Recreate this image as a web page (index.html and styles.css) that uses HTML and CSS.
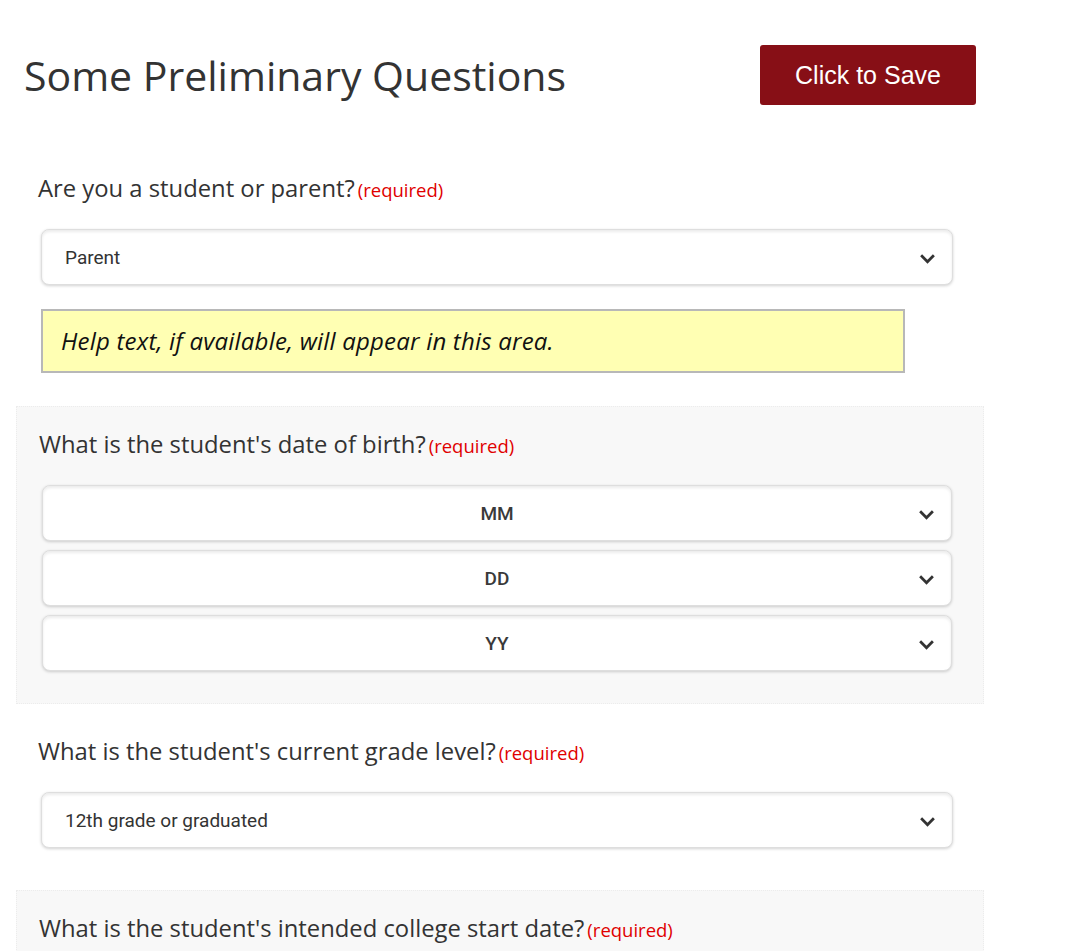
FILE: index.html
```html
<!DOCTYPE html>
<html lang="en">
<head>
    <meta charset="UTF-8">
    <meta name="viewport" content="width=device-width, initial-scale=1.0">
    <title>Some Preliminary Questions</title>
    <link rel="stylesheet" href="styles.css">
</head>
<body>
    <div class="page">
        <div class="header">
            <h1>Some Preliminary Questions</h1>
            <button type="button" class="save-btn">Click to Save</button>
        </div>

        <!-- Student or parent -->
        <div class="question has-help">
            <label class="q-label" for="role">Are you a student or parent?<span class="required">(required)</span></label>
            <div class="select-wrap">
                <select id="role">
                    <option>Parent</option>
                    <option>Student</option>
                </select>
                <svg class="chevron" viewBox="0 0 16 10"><path d="M2 2l6 6 6-6"/></svg>
            </div>
            <div class="help">Help text, if available, will appear in this area.</div>
        </div>

        <!-- Date of birth -->
        <div class="question alt">
            <label class="q-label" for="dob-mm">What is the student's date of birth?<span class="required">(required)</span></label>
            <div class="select-stack">
                <div class="select-wrap centered">
                    <select id="dob-mm"><option>MM</option></select>
                    <svg class="chevron" viewBox="0 0 16 10"><path d="M2 2l6 6 6-6"/></svg>
                </div>
                <div class="select-wrap centered">
                    <select id="dob-dd"><option>DD</option></select>
                    <svg class="chevron" viewBox="0 0 16 10"><path d="M2 2l6 6 6-6"/></svg>
                </div>
                <div class="select-wrap centered">
                    <select id="dob-yy"><option>YY</option></select>
                    <svg class="chevron" viewBox="0 0 16 10"><path d="M2 2l6 6 6-6"/></svg>
                </div>
            </div>
        </div>

        <!-- Grade level -->
        <div class="question">
            <label class="q-label" for="grade">What is the student's current grade level?<span class="required">(required)</span></label>
            <div class="select-wrap">
                <select id="grade">
                    <option>12th grade or graduated</option>
                </select>
                <svg class="chevron" viewBox="0 0 16 10"><path d="M2 2l6 6 6-6"/></svg>
            </div>
        </div>

        <!-- College start -->
        <div class="question alt">
            <label class="q-label" for="start">What is the student's intended college start date?<span class="required">(required)</span></label>
            <div class="select-wrap">
                <select id="start"><option>Select</option></select>
                <svg class="chevron" viewBox="0 0 16 10"><path d="M2 2l6 6 6-6"/></svg>
            </div>
        </div>
    </div>
</body>
</html>
```

FILE: styles.css
```css
body {
    margin: 0;
    padding: 0;
    background: #fff;
    color: #333;
    font-family: "Open Sans", Lato, sans-serif;
}

.page {
    width: 968px;
    margin-left: 16px;
}

/* Header */
.header {
    display: flex;
    align-items: center;
    justify-content: space-between;
    padding-top: 45px;
    margin-bottom: 45px;
    padding-right: 8px;
}

h1 {
    margin: 0 0 0 8px;
    font-size: 41px;
    font-weight: 400;
    color: #333;
}

.save-btn {
    width: 216px;
    height: 60px;
    border: none;
    border-radius: 3px;
    background-color: #870f16;
    color: #fff;
    font-family: "Liberation Sans", Arial, sans-serif;
    font-size: 25px;
    cursor: pointer;
}

/* Questions */
.question {
    padding: 22px 31px 33px 22px;
    margin-bottom: 9px;
}

.question.has-help {
    padding-bottom: 33px;
    margin-bottom: 0;
}

.question.alt {
    background: #f8f8f8;
    border: 1px dotted #ececec;
    padding-top: 21px;
    padding-bottom: 32px;
}

.q-label {
    display: block;
    height: 28px;
    padding-top: 2px;
    line-height: 28px;
    margin-bottom: 27px;
    font-size: 23.8px;
    color: #333;
}

.required {
    margin-left: 3px;
    font-size: 18.5px;
    color: #e00000;
}

.select-stack {
    display: flex;
    flex-direction: column;
    gap: 9px;
}

.select-wrap {
    position: relative;
    margin-left: 3px;
}

.select-wrap select {
    display: block;
    width: 100%;
    height: 56px;
    padding: 0 50px 0 23px;
    border: 1px solid #dedede;
    border-radius: 8px;
    background: #fff;
    box-shadow: inset 0 2px 3px rgba(0, 0, 0, 0.08), 0 1px 3px rgba(0, 0, 0, 0.18);
    font-family: Roboto, "Noto Sans", sans-serif;
    font-size: 19px;
    color: #333;
    appearance: none;
    -webkit-appearance: none;
}

.select-wrap.centered select {
    text-align: center;
    text-align-last: center;
    padding: 0;
    font-weight: 500;
    color: #3a3a3a;
}

.chevron {
    position: absolute;
    right: 17px;
    top: 50%;
    width: 17px;
    height: 11px;
    margin-top: -4px;
    fill: none;
    stroke: #333;
    stroke-width: 2.6;
    pointer-events: none;
}

.help {
    width: 824px;
    margin: 24px 0 0 3px;
    padding: 0 18px;
    height: 60px;
    line-height: 60px;
    background: #ffffb3;
    border: 2px solid #b8b8b8;
    font-size: 24px;
    font-style: italic;
    letter-spacing: 0.2px;
    color: #111;
}
```
